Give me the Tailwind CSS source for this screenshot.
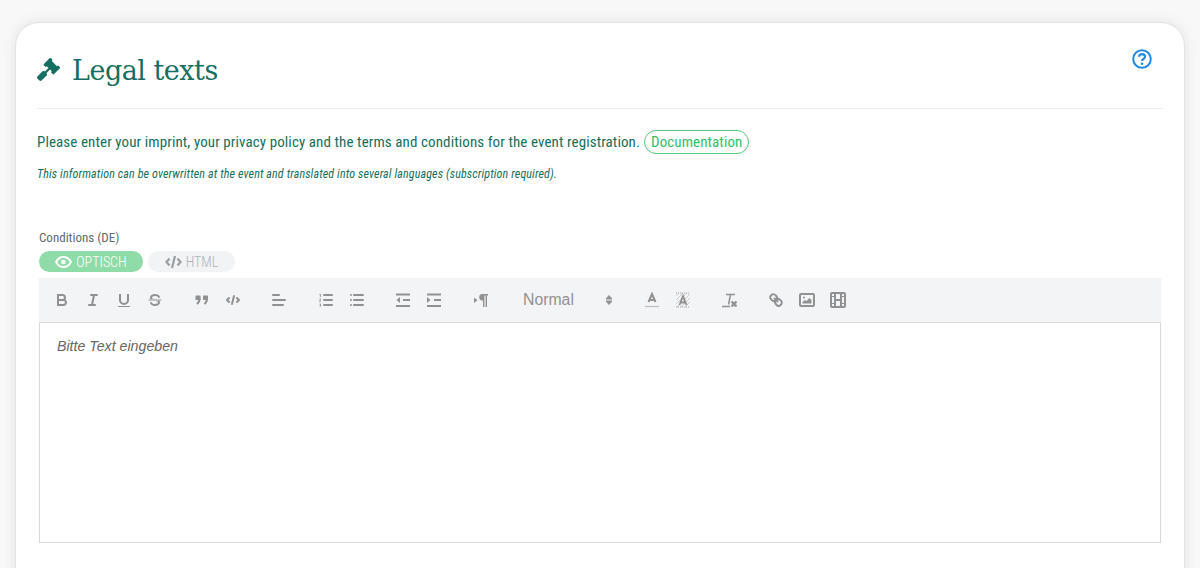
<!DOCTYPE html>
<html lang="en">
<head>
  <meta charset="UTF-8">
  <title>Legal texts</title>
  <script src="https://cdn.jsdelivr.net/npm/@tailwindcss/browser@4"></script>
</head>
<body class="bg-[#f8f8f8] h-[568px] overflow-hidden font-['Roboto',sans-serif]">
  <div class="px-[15px] pt-[22px] h-[568px] overflow-hidden">
    <div class="bg-white rounded-t-[24px] border border-[#e1e4e8] shadow-[0_0_14px_rgba(0,0,0,0.09)] h-[600px] px-[21px]">
      <!-- header -->
      <div class="flex justify-between h-[86px] border-b border-[#eeeeee]">
        <div class="flex items-center gap-[12px] h-[94px]">
          <svg class="w-[23px] h-[23px] text-[#156f60] -mt-[1px]" viewBox="0 0 512 512" fill="currentColor"><path d="M504.971 199.362l-22.627-22.627c-9.373-9.373-24.569-9.373-33.941 0l-5.657 5.657L329.608 69.255l5.657-5.657c9.373-9.373 9.373-24.569 0-33.941L312.638 7.029c-9.373-9.373-24.569-9.373-33.941 0L154.246 131.48c-9.373 9.373-9.373 24.569 0 33.941l22.627 22.627c9.373 9.373 24.569 9.373 33.941 0l5.657-5.657 39.598 39.598-81.04 81.04-5.657-5.657c-12.497-12.497-32.758-12.497-45.255 0L9.373 412.118c-12.497 12.497-12.497 32.758 0 45.255l45.255 45.255c12.497 12.497 32.758 12.497 45.255 0l114.745-114.745c12.497-12.497 12.497-32.758 0-45.255l-5.657-5.657 81.04-81.04 39.598 39.598-5.657 5.657c-9.373 9.373-9.373 24.569 0 33.941l22.627 22.627c9.373 9.373 24.569 9.373 33.941 0l124.451-124.451c9.372-9.372 9.372-24.568 0-33.941z"/></svg>
          <h1 class="font-['DejaVu_Serif',serif] text-[27px] tracking-[-0.5px] text-[#156f60] leading-none">Legal texts</h1>
        </div>
        <svg class="w-[20px] h-[20px] mt-[26px] mr-[11px] text-[#2188e0]" viewBox="0 0 20 20" fill="none" stroke="currentColor" stroke-width="2"><circle cx="10" cy="10" r="8.8"/><path d="M7 7.800c0-1.800 1.400-2.700 3-2.700s3 1 3 2.600c0 2.300-3 2.200-3 4.300" stroke-width="2.200"/><circle cx="10" cy="14.800" r="1.300" fill="currentColor" stroke="none"/></svg>
      </div>

      <!-- intro -->
      <p class="mt-[21px] h-[24px] text-[15px] leading-[24px] text-[#156f60] flex items-center tracking-[0.1px] [font-stretch:condensed]">
        Please enter your imprint, your privacy policy and the terms and conditions for the event registration.
        <a class="ml-[4px] border border-[#4fcc7c] rounded-full px-[6px] h-[24px] text-[#2fc06a] tracking-[0.1px] leading-[22px]">Documentation</a>
      </p>
      <p class="mt-[12px] text-[12px] leading-[16px] italic text-[#156f60] tracking-[0.14px] [font-stretch:condensed]">This information can be overwritten at the event and translated into several languages (subscription required).</p>

      <!-- editor -->
      <div class="mt-[48px] mx-[2px]">
        <label class="block text-[13px] leading-[16px] text-[#5b6b75] [font-stretch:condensed]">Conditions (DE)</label>
        <div class="flex gap-[5px] mt-[5px]">
          <button class="flex items-center justify-center gap-[4px] w-[104px] h-[21px] pt-[1px] rounded-full bg-[#8fdca8] text-white font-light text-[14px] [font-stretch:condensed]">
            <svg class="w-[17px] h-[16px] -mt-[1px]" viewBox="0 0 17 16" fill="none" stroke="currentColor" stroke-width="1.800"><path d="M1 8c1.800-3.400 4.300-5 7.500-5S14.200 4.600 16 8c-1.800 3.400-4.300 5-7.500 5S2.800 11.400 1 8z"/><circle cx="8.500" cy="8" r="2.300" fill="currentColor" stroke="none"/></svg>
            OPTISCH
          </button>
          <button class="flex items-center justify-center gap-[4px] w-[87px] h-[21px] pt-[1px] rounded-full bg-[#f1f3f5] text-[#aeb3b8] font-light text-[14px] [font-stretch:condensed]">
            <svg class="w-[17px] h-[14px] -mt-[1px]" viewBox="0 0 17 14" fill="none" stroke="#9a9fa4" stroke-width="2.200"><path d="M4.500 3.500 1.500 7l3 3.500M12.500 3.500l3 3.500-3 3.500M10 1 7 13"/></svg>
            HTML
          </button>
        </div>

        <!-- toolbar -->
        <div class="mt-[6px] h-[45px] bg-[#f3f4f6] border-b border-[#d9d9d9] pl-[9px] flex items-center text-[#919191]">
          <div class="flex gap-[3px] mr-[18.5px]">
            <span class="w-[28px] flex justify-center"><svg class="w-[18px] h-[18px]" viewBox="0 0 18 18" fill="none" stroke="currentColor" stroke-width="2"><path d="M5,4H9.500A2.500,2.500,0,0,1,12,6.500v0A2.500,2.500,0,0,1,9.500,9H5V4Z"/><path d="M5,9h5.500A2.500,2.500,0,0,1,13,11.500v0A2.500,2.500,0,0,1,10.500,14H5V9Z"/></svg></span>
            <span class="w-[28px] flex justify-center"><svg class="w-[18px] h-[18px]" viewBox="0 0 18 18" fill="none" stroke="currentColor" stroke-width="2" stroke-linecap="round"><path d="M7 4h6M5 14h6M8 14l2-10"/></svg></span>
            <span class="w-[28px] flex justify-center"><svg class="w-[18px] h-[18px]" viewBox="0 0 18 18" fill="none" stroke="currentColor" stroke-width="2"><path d="M5,3V9a4,4,0,0,0,4,4h0a4,4,0,0,0,4-4V3"/><rect x="3" y="15" width="12" height="1" rx=".5" fill="currentColor" stroke="none"/></svg></span>
            <span class="w-[28px] flex justify-center"><svg class="w-[18px] h-[18px]" viewBox="0 0 18 18" fill="currentColor"><rect x="2.500" y="8.500" width="13" height="1" rx=".5"/><path d="M9.007,8C6.542,7.791,6,7.519,6,6.500,6,5.792,7.283,5,9,5c1.571,0,2.765.679,2.969,1.309a1,1,0,0,0,1.900-.617C13.356,4.106,11.354,3,9,3,6.200,3,4,4.538,4,6.500a3.200,3.200,0,0,0,.5,1.843Z"/><path d="M8.984,10C11.457,10.208,12,10.479,12,11.500c0,.708-1.283,1.500-3,1.500-1.571,0-2.765-.679-2.969-1.309a1,1,0,1,0-1.900.617C4.644,13.894,6.646,15,9,15c2.800,0,5-1.538,5-3.500a3.200,3.200,0,0,0-.5-1.843Z"/></svg></span>
          </div>
          <div class="flex gap-[3px] mr-[18.5px]">
            <span class="w-[28px] flex justify-center"><svg class="w-[18px] h-[18px]" viewBox="0 0 18 18" fill="currentColor" stroke="currentColor" stroke-width="2"><rect x="2.500" y="4.500" width="5" height="4.500" rx=".5" stroke="none"/><rect x="10" y="4.500" width="5" height="4.500" rx=".5" stroke="none"/><path d="M6.600,7c0,4-2.600,6-2.600,6" fill="none"/><path d="M14.100,7c0,4-2.600,6-2.600,6" fill="none"/></svg></span>
            <span class="w-[28px] flex justify-center"><svg class="w-[18px] h-[18px]" viewBox="0 0 18 18" fill="none" stroke="currentColor" stroke-width="2" stroke-linecap="round" stroke-linejoin="round"><path d="M5 7 3 9l2 2M13 7l2 2-2 2M10 5 8 13"/></svg></span>
          </div>
          <div class="flex mr-[18.5px]">
            <span class="w-[28px] flex justify-center"><svg class="w-[18px] h-[18px]" viewBox="0 0 18 18" fill="none" stroke="currentColor" stroke-width="2" stroke-linecap="round"><path d="M3 9h12M3 14h10M3 4h6"/></svg></span>
          </div>
          <div class="flex gap-[3px] mr-[18.5px]">
            <span class="w-[28px] flex justify-center"><svg class="w-[18px] h-[18px]" viewBox="0 0 18 18" fill="none" stroke="currentColor" stroke-width="2" stroke-linecap="round"><path d="M7 4h8M7 9h8M7 14h8"/><path d="M2.500 3.300 3.400 3v3M2.500 8h1.200L2.500 10.400h1.300M2.500 13h1.300l-.6 1 .6 1.200H2.500" stroke-width=".9" stroke-linecap="butt"/></svg></span>
            <span class="w-[28px] flex justify-center"><svg class="w-[18px] h-[18px]" viewBox="0 0 18 18" fill="none" stroke="currentColor" stroke-width="2" stroke-linecap="round"><path d="M6 4h9M6 9h9M6 14h9M3 4h0M3 9h0M3 14h0"/></svg></span>
          </div>
          <div class="flex gap-[3px] mr-[18.5px]">
            <span class="w-[28px] flex justify-center"><svg class="w-[18px] h-[18px]" viewBox="0 0 18 18" fill="none" stroke="currentColor" stroke-width="2" stroke-linecap="butt"><path d="M2 15h14M2 3.500h14M9 9h7"/><path d="M6 6v6L2.500 9z" fill="currentColor" stroke="none"/></svg></span>
            <span class="w-[28px] flex justify-center"><svg class="w-[18px] h-[18px]" viewBox="0 0 18 18" fill="none" stroke="currentColor" stroke-width="2" stroke-linecap="butt"><path d="M2 15h14M2 3.500h14M9 9h7"/><path d="M2 6v6l3.500-3z" fill="currentColor" stroke="none"/></svg></span>
          </div>
          <div class="flex mr-[18.5px]">
            <span class="w-[28px] flex justify-center"><svg class="w-[18px] h-[18px]" viewBox="0 0 18 18" fill="currentColor"><path d="M2 12V6.500L5.500 9.200z"/><path d="M16 3h-5.500a3.300 3.300 0 0 0 0 6.600H11V16h1.400V4.400h1.200V16H15V4.400h1z"/></svg></span>
          </div>
          <!-- heading picker -->
          <div class="w-[108px] mr-[17px] pl-[10px] pr-[3px] flex items-center justify-between font-['Liberation_Sans',sans-serif] text-[15.8px]">
            Normal
            <svg class="w-[18px] h-[18px]" viewBox="0 0 18 18" fill="currentColor"><path d="M9 4.500 12 8H6zM9 13.500 6 10h6z" stroke="currentColor" stroke-linejoin="round"/></svg>
          </div>
          <div class="flex gap-[3px] mr-[18.5px]">
            <span class="w-[28px] flex justify-center"><svg class="w-[18px] h-[18px]" viewBox="0 0 18 18" fill="none" stroke="currentColor" stroke-width="2"><path d="M5.500 11 9 3l3.500 8M6.400 9h5.200"/><path d="M2 15.500h14" stroke="#bdbdbd" stroke-width="1.200"/></svg></span>
            <span class="w-[28px] flex justify-center"><svg class="w-[18px] h-[18px]" viewBox="0 0 18 18" fill="none" stroke="currentColor"><path d="M2 5 5 2M2 9l7-7M2 13 13 2M3 16 16 3M7 16l9-9M11 16l5-5" stroke-width=".5" opacity=".8"/><path d="M2 2h14M2 16h14" stroke-width=".8" stroke-dasharray="1 1"/><path d="M5.500 14 9 5l3.500 9M6.400 11.500h5.200" stroke-width="1.800"/></svg></span>
          </div>
          <div class="flex mr-[18.5px]">
            <span class="w-[28px] flex justify-center"><svg class="w-[18px] h-[18px]" viewBox="0 0 18 18" fill="none" stroke="currentColor" stroke-width="2"><path d="M5 3.500h9M9.500 3.500l-2 10M1 15.500h8" stroke-width="1.500"/><path d="M10.500 10.500l5 5M15.500 10.500l-5 5" stroke-width="2.400"/></svg></span>
          </div>
          <div class="flex gap-[3px]">
            <span class="w-[28px] flex justify-center"><svg class="w-[18px] h-[18px]" viewBox="0 0 18 18" fill="none" stroke="currentColor" stroke-width="2"><path d="M7 7l4 4"/><path d="M8.900,4.577a3.476,3.476,0,0,1,.36,4.679A3.476,3.476,0,0,1,4.577,8.900C3.185,7.500,2.035,6.400,4.217,4.217S7.500,3.185,8.900,4.577Z"/><path d="M13.423,9.100a3.476,3.476,0,0,0-4.679-.36,3.476,3.476,0,0,0,.36,4.679c1.392,1.392,2.500,2.542,4.679.36S14.815,10.500,13.423,9.100Z"/></svg></span>
            <span class="w-[28px] flex justify-center"><svg class="w-[18px] h-[18px]" viewBox="0 0 18 18" fill="none" stroke="currentColor" stroke-width="2"><rect x="2" y="3" width="14" height="12" rx="1"/><path d="M4.500 12.500v-1.500l2.500-2 1.500 1 3-3 2 2v3.500z" fill="currentColor" stroke="none"/><circle cx="6" cy="6.500" r="1" fill="currentColor" stroke="none"/></svg></span>
            <span class="w-[28px] flex justify-center"><svg class="w-[18px] h-[18px]" viewBox="0 0 18 18" fill="none" stroke="currentColor" stroke-width="2"><rect x="2" y="2" width="14" height="14" rx="1"/><path d="M6 2v14M12 2v14M6 9h6"/><path d="M2 5.500h4M2 12.500h4M12 5.500h4M12 12.500h4" stroke-width="1"/></svg></span>
          </div>
        </div>

        <!-- text area -->
        <div class="h-[220px] border border-t-0 border-[#d9d9d9] px-[17px] pt-[14px] font-['Liberation_Sans',sans-serif] italic text-[14.2px] leading-[18px] text-[#666666]">Bitte Text eingeben</div>
      </div>
    </div>
  </div>
</body>
</html>
